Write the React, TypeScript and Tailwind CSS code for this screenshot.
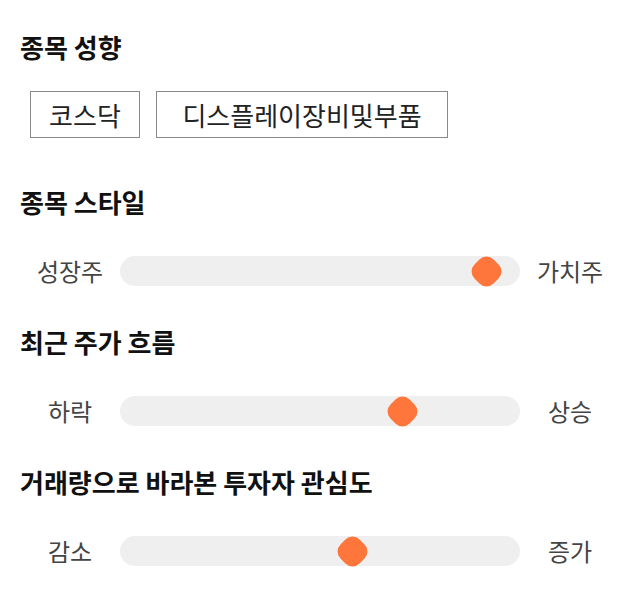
import React from "react"

const FONT = { fontFamily: '"Noto Sans CJK KR", "Noto Sans", sans-serif' }

// slider rows: left label, right label, thumb left edge inside the 400px track
const sliders = [
  { title: "종목 스타일", left: "성장주", right: "가치주", pos: 351 },
  { title: "최근 주가 흐름", left: "하락", right: "상승", pos: 267 },
  { title: "거래량으로 바라본 투자자 관심도", left: "감소", right: "증가", pos: 217 },
]

function Slider({ left, right, pos }: { left: string; right: string; pos: number }) {
  return (
    <div className="grid grid-cols-[100px_400px_100px] items-center mt-[39px]">
      <span className="text-center text-[24px] leading-[30px] text-[#444]">{left}</span>
      <div className="relative h-[30px] rounded-full bg-[#efefef]">
        <div
          className="absolute top-[1.5px] w-[27px] h-[27px] rounded-[10px] rotate-45 bg-[#ff763d]"
          style={{ left: pos + 1.5 }}
        />
      </div>
      <span className="text-center text-[24px] leading-[30px] text-[#444]">{right}</span>
    </div>
  )
}

export default function App() {
  return (
    <div className="w-[640px] h-[606px] bg-white pl-5 pt-8" style={FONT}>
      <h2 className="text-[26px] leading-[30px] font-bold text-[#111]">종목 성향</h2>
      <div className="flex gap-4 ml-[10px] mt-[29px]">
        <div className="w-[110px] h-[47px] border border-[#8a8a8a] flex items-center justify-center text-[26px] text-[#222]">
          코스닥
        </div>
        <div className="w-[292px] h-[47px] border border-[#8a8a8a] flex items-center justify-center text-[26px] text-[#222]">
          디스플레이장비및부품
        </div>
      </div>
      {sliders.map((s, i) => (
        <div key={s.title} className={i === 0 ? "mt-[49px]" : "mt-[41px]"}>
          <h2 className="text-[26px] leading-[30px] font-bold text-[#111]">{s.title}</h2>
          <Slider left={s.left} right={s.right} pos={s.pos} />
        </div>
      ))}
    </div>
  )
}
